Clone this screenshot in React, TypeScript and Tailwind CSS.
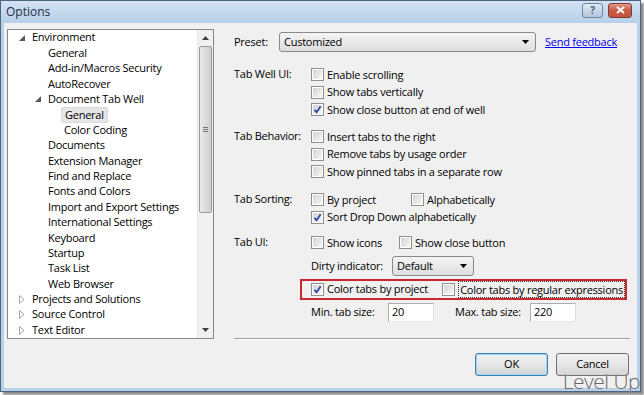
import React from "react";

const font = "font-['Segoe_UI','Open_Sans',sans-serif]";

const Check = ({ checked }: { checked?: boolean }) => (
  <span className="w-[13px] h-[13px] border border-[#8e8f8f] bg-white p-px shrink-0 flex">
    <span className="flex-1 bg-gradient-to-br from-[#d4d4d4] to-[#f6f6f6] flex items-center justify-center">
      {checked && (
        <svg width="9" height="9" viewBox="0 0 9 9">
          <path d="M1.5 4.8 L3.6 7.2 L7.6 1.2" fill="none" stroke="#2d4ea0" strokeWidth="1.8" />
        </svg>
      )}
    </span>
  </span>
);

const CheckRow = ({ label, checked, boxed }: { label: string; checked?: boolean; boxed?: boolean }) => (
  <span className="flex items-center gap-[3px] whitespace-nowrap">
    <Check checked={checked} />
    <span className={boxed ? "border border-dotted border-[#333] px-px leading-[15px]" : ""}>{label}</span>
  </span>
);

const Combo = ({ value, className }: { value: string; className: string }) => (
  <div
    className={`${className} h-[20px] border border-[#8a8a8a] rounded-[3px] bg-gradient-to-b from-[#f4f4f4] to-[#dedede] flex items-center pl-[4px] pr-[6px]`}
  >
    <span className="flex-1">{value}</span>
    <svg width="7" height="4" viewBox="0 0 7 4">
      <path d="M0 0 H7 L3.5 4 Z" fill="#000" />
    </svg>
  </div>
);

const Input = ({ value }: { value: string }) => (
  <div className="w-[46px] h-[19px] shrink-0 bg-white border border-[#abadb3] border-b-[#e3e9ef] border-r-[#dbdfe6] pl-[3px] flex items-center">
    {value}
  </div>
);

type Node = { t: string; l: number; e?: "open" | "closed"; sel?: boolean };

const tree: Node[] = [
  { t: "Environment", l: 0, e: "open" },
  { t: "General", l: 1 },
  { t: "Add-in/Macros Security", l: 1 },
  { t: "AutoRecover", l: 1 },
  { t: "Document Tab Well", l: 1, e: "open" },
  { t: "General", l: 2, sel: true },
  { t: "Color Coding", l: 2 },
  { t: "Documents", l: 1 },
  { t: "Extension Manager", l: 1 },
  { t: "Find and Replace", l: 1 },
  { t: "Fonts and Colors", l: 1 },
  { t: "Import and Export Settings", l: 1 },
  { t: "International Settings", l: 1 },
  { t: "Keyboard", l: 1 },
  { t: "Startup", l: 1 },
  { t: "Task List", l: 1 },
  { t: "Web Browser", l: 1 },
  { t: "Projects and Solutions", l: 0, e: "closed" },
  { t: "Source Control", l: 0, e: "closed" },
  { t: "Text Editor", l: 0, e: "closed" },
];

const indent = ["pl-[9px]", "pl-[25px]", "pl-[41px]"];

const Expander = ({ e }: { e?: "open" | "closed" }) => (
  <span className="w-[14px] h-full flex items-center justify-start pl-[2px] shrink-0">
    {e === "open" && (
      <svg width="6" height="6" viewBox="0 0 6 6">
        <path d="M6 0 V6 H0 Z" fill="#595959" />
      </svg>
    )}
    {e === "closed" && (
      <svg width="6" height="9" viewBox="0 0 6 9">
        <path d="M0.5 0.5 L5 4.5 L0.5 8.5 Z" fill="none" stroke="#a6a6a6" />
      </svg>
    )}
  </span>
);

const TreeView = () => (
  <div className="w-[207px] h-[310px] border border-[#828790] bg-white flex">
    <div className="flex-1 flex flex-col">
      {tree.map((n, i) => (
        <div key={i} className={`h-[15.4px] flex items-center ${indent[n.l]}`}>
          <Expander e={n.e} />
          <span
            className={
              n.sel
                ? "ml-[-2px] px-[3px] border border-[#d9d9d9] bg-[#e6e6e6] rounded-[2px] leading-[14px]"
                : "ml-px whitespace-nowrap"
            }
          >
            {n.t}
          </span>
        </div>
      ))}
    </div>
    <div className="w-[16px] bg-[#f0f0f0] border-l border-[#e6e6e6] flex flex-col items-center">
      <div className="h-[16px] flex items-center justify-center">
        <svg width="7" height="4" viewBox="0 0 7 4">
          <path d="M3.5 0 L7 4 H0 Z" fill="#404040" />
        </svg>
      </div>
      <div className="w-[13px] h-[167px] border border-[#9a9a9a] rounded-[2px] bg-gradient-to-r from-[#ececec] via-[#dcdcdc] to-[#cfcfcf] flex items-center justify-center">
        <div className="flex flex-col gap-px">
          <span className="w-[5px] h-px bg-[#777]" />
          <span className="w-[5px] h-px bg-[#777]" />
          <span className="w-[5px] h-px bg-[#777]" />
        </div>
      </div>
      <div className="flex-1" />
      <div className="h-[16px] flex items-center justify-center">
        <svg width="7" height="4" viewBox="0 0 7 4">
          <path d="M0 0 H7 L3.5 4 Z" fill="#404040" />
        </svg>
      </div>
    </div>
  </div>
);

const Label = ({ children }: { children: React.ReactNode }) => (
  <span className="w-[77px] shrink-0 whitespace-nowrap">{children}</span>
);

const Row = ({ children }: { children: React.ReactNode }) => (
  <div className="h-[17.5px] flex items-center">{children}</div>
);

const RightPanel = () => (
  <div className="w-[398px] flex flex-col pl-[2px] whitespace-nowrap">
    <div className="mt-[3px] h-[20px] flex items-center">
      <span className="w-[45px]">Preset:</span>
      <Combo value="Customized" className="w-[257px]" />
      <span className="ml-[9px] text-[#0000ee] underline">Send feedback</span>
    </div>

    <div className="mt-[14px] flex">
      <Label>Tab Well UI:</Label>
      <div className="flex flex-col">
        <Row><CheckRow label="Enable scrolling" /></Row>
        <Row><CheckRow label="Show tabs vertically" /></Row>
        <Row><CheckRow label="Show close button at end of well" checked /></Row>
      </div>
    </div>

    <div className="mt-[9.5px] flex">
      <Label>Tab Behavior:</Label>
      <div className="flex flex-col">
        <Row><CheckRow label="Insert tabs to the right" /></Row>
        <Row><CheckRow label="Remove tabs by usage order" /></Row>
        <Row><CheckRow label="Show pinned tabs in a separate row" /></Row>
      </div>
    </div>

    <div className="mt-[10.5px] flex">
      <Label>Tab Sorting:</Label>
      <div className="flex flex-col">
        <Row>
          <span className="w-[100px]"><CheckRow label="By project" /></span>
          <CheckRow label="Alphabetically" />
        </Row>
        <Row><CheckRow label="Sort Drop Down alphabetically" checked /></Row>
      </div>
    </div>

    <div className="mt-[8px] flex">
      <Label>Tab UI:</Label>
      <div className="flex flex-col">
        <Row>
          <span className="w-[88px]"><CheckRow label="Show icons" /></span>
          <CheckRow label="Show close button" />
        </Row>
      </div>
    </div>

    <div className="mt-[4.5px] h-[20px] flex items-center pl-[77px]">
      <span className="w-[81px]">Dirty indicator:</span>
      <Combo value="Default" className="w-[82px]" />
    </div>

    <div className="mt-[3px] ml-[66px] w-[327px] h-[21px] border-2 border-[#c8282c] flex items-center pl-[9px]">
      <span className="w-[133px]"><CheckRow label="Color tabs by project" checked /></span>
      <CheckRow label="Color tabs by regular expressions" boxed />
    </div>

    <div className="mt-[3px] h-[19px] flex items-center pl-[77px]">
      <span className="w-[77px]">Min. tab size:</span>
      <Input value="20" />
      <span className="ml-[21px] w-[75px]">Max. tab size:</span>
      <Input value="220" />
    </div>

    <div className="mt-[16px] h-px bg-[#a0a0a0] border-b border-white box-content w-[396px]" />
  </div>
);

const Button = ({ label, focused }: { label: string; focused?: boolean }) => (
  <div
    className={`w-[73px] h-[23px] rounded-[3px] border flex items-center justify-center bg-gradient-to-b from-[#f2f2f2] via-[#e6e6e6] to-[#d4d4d4] ${
      focused ? "border-[#3c7fb1] shadow-[inset_0_0_0_1px_#9fd6f2]" : "border-[#707070]"
    }`}
  >
    {label}
  </div>
);

export default function App() {
  return (
    <div className={`w-[644px] h-[395px] bg-white relative text-[11px] tracking-[-0.25px] text-black ${font}`}>
      <div className="w-[641px] h-[392px] border border-[#4d6580] bg-[#b9d0e9] flex flex-col px-[3px] pb-[3px] shadow-[3px_3px_2px_rgba(0,0,0,0.45)]">
        <div className="h-[22px] -mx-[3px] px-[5px] flex items-center bg-gradient-to-b from-[#d3e2f3] to-[#b7cfe9]">
          <span className="flex-1 text-[#1e2f45] text-[12px] tracking-normal">Options</span>
          <div className="flex gap-[5px] pr-[3px] -mt-[4px]">
            <div className="w-[21px] h-[15px] rounded-[3px] border border-[#6e87a4] bg-gradient-to-b from-[#dde8f4] to-[#b3c6dc] flex items-center justify-center text-[10px] font-bold text-[#4f5e71] leading-none">
              ?
            </div>
            <div className="w-[24px] h-[15px] rounded-[3px] border border-[#7a3a34] bg-gradient-to-b from-[#e29a8c] via-[#c85a44] to-[#c9533a] flex items-center justify-center">
              <svg width="9" height="8" viewBox="0 0 9 8">
                <path d="M1 1 L8 7 M8 1 L1 7" stroke="#fff" strokeWidth="2" />
              </svg>
            </div>
          </div>
        </div>
        <div className="flex-1 bg-[#f0f0f0] flex flex-col">
          <div className="mt-[6px] ml-[3px] flex">
            <TreeView />
            <div className="ml-[18px]">
              <RightPanel />
            </div>
          </div>
          <div className="mt-[13px] flex justify-end gap-[8px] pr-[8px]">
            <Button label="OK" focused />
            <Button label="Cancel" />
          </div>
        </div>
      </div>
      <span className="absolute right-[4px] bottom-[3px] whitespace-nowrap text-[21px] leading-[22px] tracking-[-0.5px] font-light text-[#666] font-['Open_Sans',sans-serif] [text-shadow:0_0_1px_#fff]">
        Level Up
      </span>
    </div>
  );
}
